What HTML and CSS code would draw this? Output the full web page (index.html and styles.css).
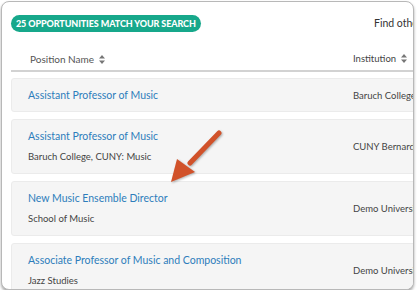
FILE: index.html
```html
<!DOCTYPE html>
<html>
<head>
    <title>Opportunities</title>
    <meta charset="UTF-8">
    <link rel="stylesheet" href="styles.css">
</head>
<body>
    <div class="panel">
        <div class="toolbar">
            <span class="badge">25 Opportunities match your search</span>
            <span class="find-other">Find other opportunities</span>
        </div>

        <div class="results">
            <div class="head">
                <div class="col-pos">Position Name
                    <svg class="sort" width="6" height="9" viewBox="0 0 6 9"><path d="M3 0L6 3.5H0Z M3 9L6 5.5H0Z" fill="#777"/></svg>
                </div>
                <div class="col-inst">Institution
                    <svg class="sort" width="6" height="9" viewBox="0 0 6 9"><path d="M3 0L6 3.5H0Z M3 9L6 5.5H0Z" fill="#777"/></svg>
                </div>
            </div>

            <div class="card">
                <div class="col-pos">
                    <a href="#" class="title">Assistant Professor of Music</a>
                </div>
                <div class="col-inst">Baruch College, CUNY</div>
            </div>

            <div class="card">
                <div class="col-pos">
                    <a href="#" class="title">Assistant Professor of Music</a>
                    <div class="dept">Baruch College, CUNY: Music</div>
                </div>
                <div class="col-inst">CUNY Bernard M. Baruch College</div>
            </div>

            <div class="card">
                <div class="col-pos">
                    <a href="#" class="title">New Music Ensemble Director</a>
                    <div class="dept">School of Music</div>
                </div>
                <div class="col-inst">Demo University</div>
            </div>

            <div class="card">
                <div class="col-pos">
                    <a href="#" class="title">Associate Professor of Music and Composition</a>
                    <div class="dept">Jazz Studies</div>
                </div>
                <div class="col-inst">Demo University</div>
            </div>
        </div>
    </div>

    <!-- callout arrow -->
    <svg class="arrow" width="62" height="62" viewBox="0 0 62 62">
        <line x1="53" y1="3" x2="24" y2="33" stroke="#d1522a" stroke-width="5" stroke-linecap="round"/>
        <polygon points="5,52 11,29 29,42" fill="#d1522a"/>
    </svg>
</body>
</html>
```

FILE: styles.css
```css
body {
    margin: 0;
    background: #fff;
    font-family: Lato, "Open Sans", sans-serif;
}

.panel {
    position: relative;
    margin: 1px 3px 0 1px;
    height: 287px;
    border: 1px solid #b8b8b8;
    border-radius: 8px;
    box-shadow: 0 2px 3px rgba(0, 0, 0, 0.35);
    overflow: hidden;
    background: #fff;
}

.toolbar {
    display: grid;
    grid-template-columns: 363px auto;
    align-items: center;
    padding: 13px 0 0 9px;
    white-space: nowrap;
}

.badge {
    justify-self: start;
    background: #17a88b;
    color: #fff;
    font-size: 9px;
    font-weight: 900;
    line-height: 17px;
    padding: 0 5px;
    border-radius: 9px;
    text-transform: uppercase;
    letter-spacing: -0.1px;
}

.find-other {
    font-size: 10.5px;
    color: #333;
    margin-top: -2px;
}

.results {
    width: 620px;
    padding-left: 9px;
}

.head {
    display: flex;
    margin-top: 20px;
    padding-bottom: 4px;
    border-bottom: 2px solid #d2d2d2;
    margin-bottom: 6px;
    font-size: 10px;
    line-height: 14px;
    color: #555;
}

.head .col-pos {
    padding-left: 19px;
    width: 323px;
}

.sort {
    margin-left: 2px;
    vertical-align: -1px;
}

.card {
    display: flex;
    align-items: center;
    background: #f5f5f5;
    border: 1px solid #ebebeb;
    border-radius: 3px;
    padding: 9px 0;
    margin-bottom: 7px;
}

.col-pos {
    width: 325px;
    padding-left: 16px;
    white-space: nowrap;
}

.col-inst {
    font-size: 9.5px;
    color: #444;
    white-space: nowrap;
}

.title {
    display: block;
    font-size: 10.5px;
    line-height: 14px;
    color: #2d7dbb;
    text-decoration: none;
}

.dept {
    margin-top: 7px;
    font-size: 9.5px;
    line-height: 14px;
    color: #444;
}

.arrow {
    position: absolute;
    left: 166px;
    top: 130px;
    filter: drop-shadow(1px 1px 1px rgba(0, 0, 0, 0.3));
}
```
